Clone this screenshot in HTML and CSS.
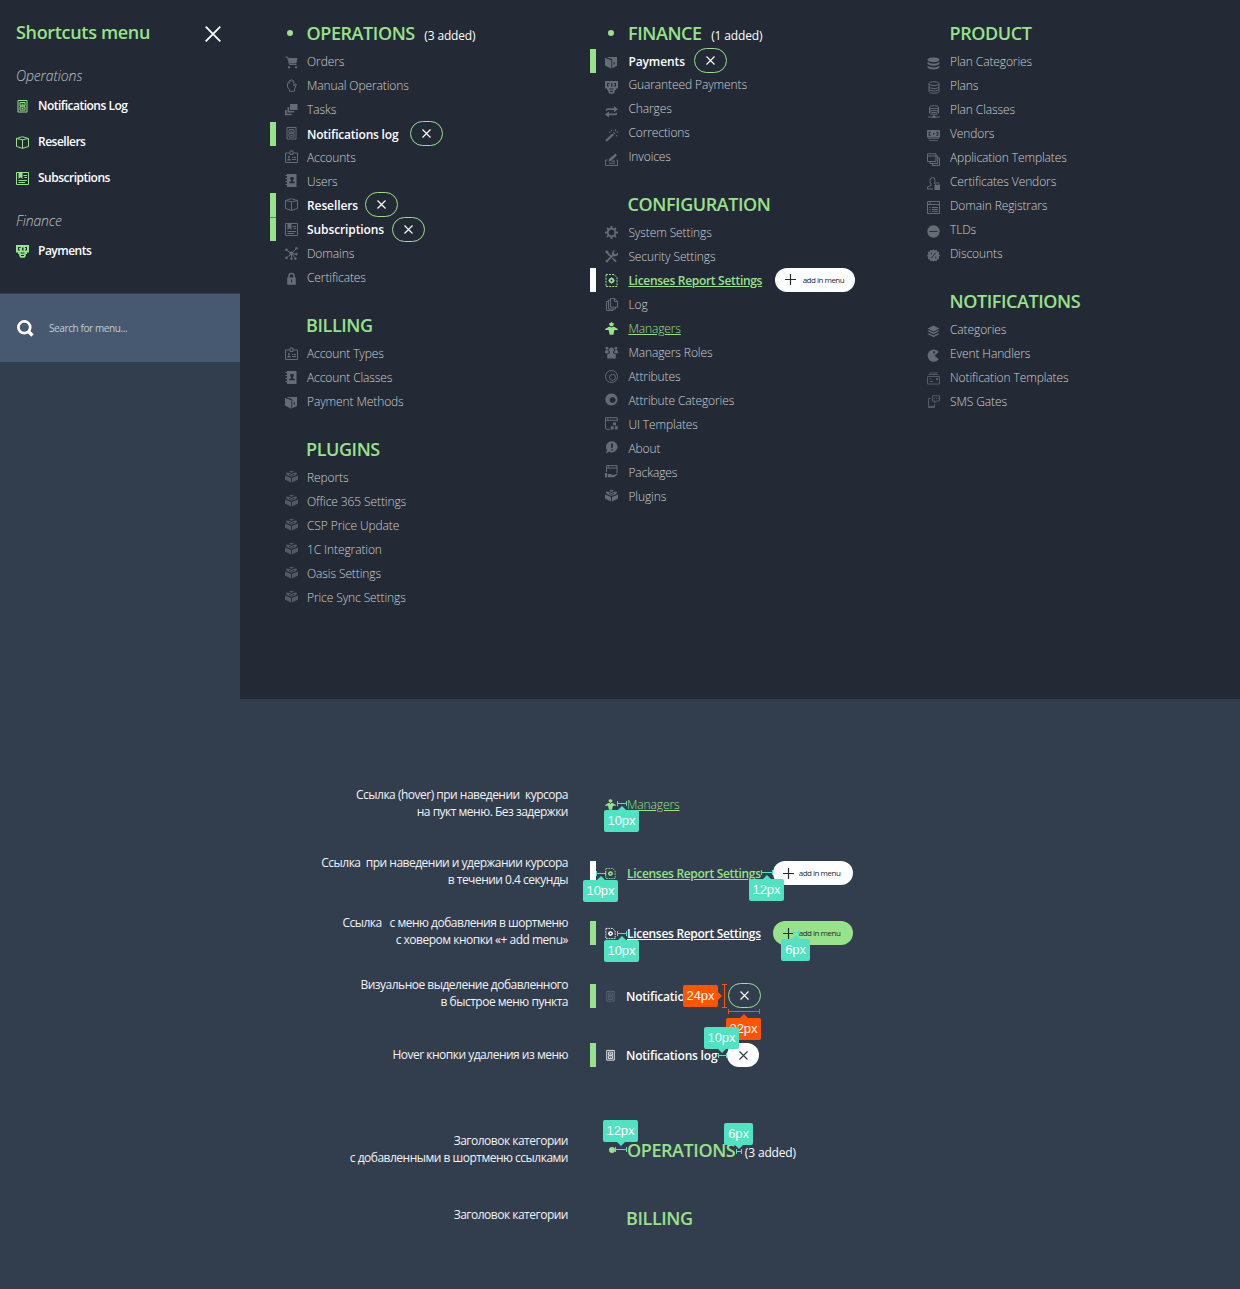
FILE: index.html
```html
<!DOCTYPE html>
<html lang="en">
<head>
<meta charset="utf-8">
<title>Shortcuts menu</title>
<link rel="stylesheet" href="styles.css">
</head>
<body>
<svg class="sprite" aria-hidden="true">
  <symbol id="i-cart" viewBox="0 0 13 13"><path d="M.5 1h2l2 7.5h7" class="s"/><path d="M3 2h9.5l-1.2 5.500H4.500zM4 10a1.200 1.200 0 1 0 .1 0zM11 10a1.200 1.200 0 1 0 .1 0z"/></symbol>
  <symbol id="i-hand" viewBox="0 0 13 13"><path d="M2.500 7V4.500q0-.8.8-.8t.8.8V2.200q0-.8.8-.8t.8.8V1.500q0-.8.8-.8t.8.8v1q0-.8.8-.8t.8.8V7l1.200-1.700q.7-.6 1.300 0L9.500 10v2.300h-5V10.500Q2.500 9 2.500 7z" class="s"/></symbol>
  <symbol id="i-tasks" viewBox="0 0 13 13"><path d="M5 1h7.500v6H5zM2.500 4h1.700v4h5v1.500H2.500zM0 7h1.700v3.800h5v1.500H0z"/></symbol>
  <symbol id="i-cabinet" viewBox="0 0 13 13"><path d="M2 .5h9v11.500H2zM4 2.500h5v3.300H4zM4 6.800h5v3.300H4z" class="s"/><path d="M5.500 3.700h2v1h-2zM5.500 8h2v1h-2z"/></symbol>
  <symbol id="i-badge" viewBox="0 0 13 13"><path d="M5 3H.5v9.500h12V3H8M5 1h3v3.500H5z" class="s"/><path d="M4 6a1 1 0 1 1-.1 0zM2.200 10.500Q2.200 8.500 4 8.500t1.800 2zM7 7h1.500v1H7zM9 7h2v1H9zM7 9h4v1H7z"/></symbol>
  <symbol id="i-book" viewBox="0 0 13 13"><path fill-rule="evenodd" d="M2 0h9.500v13H2v-2H.5v-1H2V8H.5V7H2V5H.5V4H2V2H.5V1H2zM7 3a1.500 1.500 0 0 0-.7 3L6 7.200 4.300 8v1.200h5.400V8L8 7.200 7.700 6A1.500 1.500 0 0 0 7 3z"/></symbol>
  <symbol id="i-box" viewBox="0 0 13 13"><path d="M.5 2.500 6.500 .7l6 1.800v8l-6 1.900-6-1.900zM.5 2.500l6 1.300 6-1.300M6.500 3.800v8.500" class="s"/></symbol>
  <symbol id="i-news" viewBox="0 0 13 13"><path d="M.5 .5h12v12H.5zM7.500 3.500H11M8.500 5.500H11M2.500 8.500H11M2.500 10.500H9" class="s"/><path d="M2.500 1h4v6l-2-1.800L2.500 7z"/></symbol>
  <symbol id="i-nodes" viewBox="0 0 13 13"><path d="m1.500 3 5 3.500 5-5M1.500 11l5-4.500 5 1M6.500 6.500V12M6.500 6.500l4 5" class="s"/><path d="M1.500 1.500a1.300 1.300 0 1 1-.1 0zM11.500 0a1.300 1.300 0 1 1-.1 0zM1.500 9.500a1.300 1.300 0 1 1-.1 0zM11.500 5.800a1.300 1.300 0 1 1-.1 0zM6.500 10.300a1.300 1.300 0 1 1-.1 0zM10.500 10.300a1.300 1.300 0 1 1-.1 0zM6.500 4.500a2 2 0 1 1-.1 0z"/></symbol>
  <symbol id="i-lock" viewBox="0 0 13 13"><path fill-rule="evenodd" d="M2.200 5.500h1V4a3.300 3.300 0 0 1 6.600 0v1.500h1V12.800H2.200zM4.700 5.500h3.600V4a1.800 1.800 0 0 0-3.600 0zM6 7.500v3h1v-3z"/></symbol>
  <symbol id="i-wallet" viewBox="0 0 13 13"><path d="M0 1.800 6.300 4v8.800L0 9.500z"/><path fill-rule="evenodd" d="M1 1h11v9L7.200 12.300V3.500zM8.600 6.500v2h1.300v-2z"/><path d="m1 1.800 6 1.700" class="cut"/></symbol>
  <symbol id="i-brick" viewBox="0 0 13 13"><path d="M0 5.500 6 8v4.500l-6-3zM13 5.500 7 8v4.500l6-3zM6.500 2.500 12 4.700 6.500 7 1 4.700z"/><path d="M4.500 1.200q2-1 4 0v1h-4zM1 3q1.500-1 3 0v1H1zM9 3q1.500-1 3 0v1H9z"/><path d="M4 4.700h1.500M7.500 4.700H9M5.500 3.500h2M5.500 5.900h2" class="cut"/></symbol>
  <symbol id="i-cash" viewBox="0 0 13 13"><path fill-rule="evenodd" d="M0 0h13v7.500h-2V9H9.800v2L8.500 12.700h-4L3.200 11V9H2V7.500H0zM2 2v3.500h2v-1H3V3h1.500V2zM9 2v1h1v1.500H9v1h2V2zM6 2.500v3h1.500v-3zM4.500 7.500v1h4v-1zM5 10v1h3v-1z"/></symbol>
  <symbol id="i-swap" viewBox="0 0 13 13"><path d="M.8 6V5q0-1.700 1.700-1.700H9V1l4 3.200-4 3V5H3zM12.200 7.500v1q0 1.800-1.700 1.800H4v2.200L0 9.400 4 6.500v2.100h6z"/></symbol>
  <symbol id="i-wand" viewBox="0 0 13 13"><path d="M.2 11.200 7.300 4.500l1.700 1.600-7.200 6.700zM8 3.700l.7-.7 1.700 1.600-.7.800zM6 .8h1.200V2H6zM10 .3h1v2h-1zM11.500 2.500H13v1h-1.500zM11 6h1.200v1.200H11zM4.200 2.500h1.200v1.200H4.200z"/></symbol>
  <symbol id="i-invoice" viewBox="0 0 13 13"><path d="M2.500 7H.5v5.500h12V7h-1M4 10.200h6" class="s"/><path d="M3.500 8.500 4 6l6.500-5.500 1.500 1.700-6 5.700zM7.500 7.500H10v1.200H6.500z"/></symbol>
  <symbol id="i-gear" viewBox="0 0 13 13"><circle cx="6.500" cy="6.500" r="3.800" class="s s2"/><path d="M5.500 0h2v2.500h-2zM5.500 10.500h2V13h-2zM0 5.500h2.500v2H0zM10.500 5.500H13v2h-2.500zM1.300 2.700l1.400-1.400 1.600 1.600-1.400 1.400zM10.300 1.300l1.400 1.400-1.600 1.600-1.400-1.400zM1.300 10.300l1.600-1.600 1.400 1.400-1.600 1.600zM8.700 10.100l1.400-1.400 1.600 1.600-1.400 1.400z"/></symbol>
  <symbol id="i-tools" viewBox="0 0 13 13"><path d="m1 1.500 6 6M7.500 8l3.500 3.700M2 11.200 8.500 4.700" class="s s2"/><path d="M12.800 2.500 11 4.300l-1.800-.6-.5-1.700L10.500.2Q7.500 0 7 2.500t1 3.400 3.800-.2 1-3.200zM.3 1.700 1.700.3l2 1.500-1 1.400zM1.500 9.800 3.300 11.500 2 12.800.3 11.200z"/></symbol>
  <symbol id="i-license" viewBox="0 0 13 13"><path d="M1 .5h8l3 3v9H1z" class="s dash"/><circle cx="6.500" cy="6.500" r="1.900" class="s s2"/><path d="M6 3.500h1v1H6zM6 8.500h1v1H6zM3.500 6h1v1h-1zM8.500 6h1v1h-1z"/></symbol>
  <symbol id="i-copy" viewBox="0 0 13 13"><path d="M5.500.5h4.300l2.700 2.700v6h-7zM9.500.5v3h3M5.500 2H3.500v9h7V9.500M3.500 3.500H1.500v9h6.500V11" class="s"/></symbol>
  <symbol id="i-manager" viewBox="0 0 13 13"><path d="M6.500 0 7.700 1h1v2Q8 4.300 6.500 4.300T4.300 3V1h1zM4 4.800h1.500l1 1 1-1H9L12.800 7v1H9.500L9 9.500l-.6 3.300H4.600L4 9.500 3.500 8H.2V7z"/></symbol>
  <symbol id="i-team" viewBox="0 0 13 13"><path d="M6.500 1.500a2.300 2.300 0 0 1 1.500 4.200L8 7l2.800 1.500v4H2.200v-4L5 7V5.700a2.300 2.300 0 0 1 1.500-4.200zM2 .8a1.500 1.500 0 1 1-.1 0zM11 .8a1.500 1.500 0 1 1-.1 0zM0 7V5l1.500-1 2 .5v1L4 6.500 2.200 7.500zM13 7V5l-1.500-1-2 .5v1L9 6.500l1.800 1z"/></symbol>
  <symbol id="i-rings" viewBox="0 0 13 13"><circle cx="6.500" cy="6.500" r="6" class="s"/><circle cx="7.500" cy="7.300" r="3" class="s"/></symbol>
  <symbol id="i-disc" viewBox="0 0 13 13"><path fill-rule="evenodd" d="M6.500.4a6.100 6.100 0 1 1-.1 0zM7.500 4a3 3 0 1 0 .1 0z"/></symbol>
  <symbol id="i-ui" viewBox="0 0 13 13"><path d="M5 12.300H2Q.5 12.300.5 11V.7h11.700V4.500M.5 3.300H12M2 2h1.500" class="s"/><path d="M8 5.500h3v2.700H8zM5.700 9.300h3V12.500h-3zM10 9.300h2.700v3.200H10z"/></symbol>
  <symbol id="i-about" viewBox="0 0 13 13"><path fill-rule="evenodd" d="M7 .3a5.600 5.600 0 1 1-2.800 10.500L1 12.500 2 9A5.600 5.600 0 0 1 7 .3zM6 2.500 6.300 7h1.400L8 2.500zM6.300 8v1.500h1.400V8z"/></symbol>
  <symbol id="i-package" viewBox="0 0 13 13"><path d="M1.500 7V.6h10.500V8M1.500 3H12M3 1.800h1" class="s"/><path d="M0 8h2v4.500H0zM2.700 9h3l1.500 1H9l3-1.500.5 1L9 12.200H2.700z"/></symbol>
  <symbol id="i-stack" viewBox="0 0 13 13"><path d="M6.500.5c3.300 0 6 .9 6 2.300S9.800 5.200 6.500 5.200.5 4.200.5 2.800s2.700-2.300 6-2.300zM.5 5q2 1.800 6 1.800t6-1.800v1.500q-1.500 2.200-6 2.200T.5 6.500zM.5 8.800q2 1.800 6 1.800t6-1.800v1.500q-1.500 2.200-6 2.200t-6-2.200z"/></symbol>
  <symbol id="i-db" viewBox="0 0 13 13"><path d="M2 2.500Q2 .7 7 .7t5 1.800v8q0 1.800-5 1.800t-5-1.800zM2 3q1 1.500 5 1.500T12 3M2 6q1 1.500 5 1.500T12 6M2 8.500Q3 10 7 10t5-1.500" class="s"/></symbol>
  <symbol id="i-dbnet" viewBox="0 0 13 13"><path d="M2.500 2q0-1.300 4.500-1.300T11.500 2v6q0 1.300-4.500 1.300T2.500 8zM2.500 2.500Q3.500 3.700 7 3.700t4.500-1.200M2.500 4.500Q3.500 5.700 7 5.700t4.500-1.200M2.500 6.300Q3.500 7.500 7 7.500t4.500-1.200M7 9.500v2.500M1 12h12" class="s"/><path d="M5.500 11h3v2h-3z"/></symbol>
  <symbol id="i-money" viewBox="0 0 13 13"><path fill-rule="evenodd" d="M0 1h13v7.500H0zM1.700 2.700v4h2v-1h-1v-2h1v-1zM9.300 2.700v1h1v2h-1v1h2v-4zM6 4v1.500h1.300V4zM1 9.300h11v.8H1zM2 11h9v.8H2z"/></symbol>
  <symbol id="i-windows" viewBox="0 0 13 13"><path d="M.5.8h8.500v7.700H.5zM.5 3H9M9 3h1.700v7.500H3V8.500M10.700 5h1.800v7.500H5.500V10.500" class="s"/></symbol>
  <symbol id="i-userlock" viewBox="0 0 13 13"><path d="M6 12H.5v-2L4 8.500V7Q3 6 3 3.500t2.500-3 2.500 3T7 7" class="s"/><path fill-rule="evenodd" d="M7.500 8h.7V7a2.200 2.200 0 0 1 4.300 0v1h.5v5H7.500zM9.300 8h2.200V7a1.100 1.100 0 0 0-2.200 0z"/></symbol>
  <symbol id="i-browser" viewBox="0 0 13 13"><path d="M.5.5h12v12H.5zM.5 3.500h12M5 6.500h6M5 8.500h6M5 10.300h6M2 2h2" class="s"/><path d="M2.300 6h1.200v1H2.300zM2.300 8h1.200v1H2.300zM2.300 9.800h1.200v1H2.300z"/></symbol>
  <symbol id="i-tld" viewBox="0 0 13 13"><circle cx="6.500" cy="6.500" r="6.200"/><path d="M2.500 6.500h8" class="cut"/></symbol>
  <symbol id="i-discount" viewBox="0 0 13 13"><path d="m6.500.2 1.300 1.200 1.700-.6.700 1.700 1.900.6-.3 1.900L13 6.500l-1.200 1.500.3 1.900-1.900.6-.7 1.700-1.700-.6-1.300 1.200-1.300-1.200-1.700.6-.7-1.700-1.900-.6.300-1.900L0 6.500 1.200 5 .9 3.100l1.900-.6.700-1.700 1.700.6z"/><path d="m9 3.500-5 6M4.300 3.500v2M8.800 7.500v2" class="cut"/></symbol>
  <symbol id="i-layers" viewBox="0 0 13 13"><path d="M6.500.5 12.500 3.500l-6 3-6-3zM.5 6 2 5.300l4.500 2.200L11 5.300l1.500.7-6 3.200zM.5 9 2 8.300l4.500 2.200L11 8.300l1.500.7-6 3.300z"/></symbol>
  <symbol id="i-pac" viewBox="0 0 13 13"><path fill-rule="evenodd" d="M11.800 3 7.500 6.500l4.300 3.700A6.200 6.200 0 1 1 11.800 3zM7 2.300a1 1 0 1 0 .1 0z"/></symbol>
  <symbol id="i-card" viewBox="0 0 13 13"><path d="M.5 4.500h12v7.500H.5zM1.500 2.500h10M2.500.9h8M2.500 7h2M2.500 9.500H6" class="s"/><path d="M9 6h2.200v2.200H9z"/></symbol>
  <symbol id="i-sms" viewBox="0 0 13 13"><path d="M4 3.500H1.500v9h6V9M5.500.8h7V6H9L7.500 8V6h-2z" class="s"/><path d="M7 3h1v1H7zM9 3h1v1H9zM11 3h1v1h-1zM1.500 11h6v1.500h-6z"/></symbol>
  <symbol id="i-search" viewBox="0 0 17 17"><circle cx="7.300" cy="7.300" r="5.900" class="s s3"/><path d="m11.500 11.500 4 4" class="s s4"/></symbol>
  <symbol id="i-close" viewBox="0 0 16 16"><path d="m.7.7 14.600 14.600M15.300.7.7 15.300" class="s s2"/></symbol>
  <symbol id="i-x" viewBox="0 0 9 9"><path d="m.5.500 8 8M8.500.5l-8 8" class="s sx"/></symbol>
  <symbol id="i-plus" viewBox="0 0 11 11"><path d="M5.500 0v11M0 5.500h11" class="s sx"/></symbol>
</svg>

<div class="app">
  <aside class="sidebar">
    <section class="shortcuts">
      <header class="shortcuts-head"><h1>Shortcuts menu</h1><svg class="close"><use href="#i-close"/></svg></header>
      <h3>Operations</h3>
      <ul>
        <li><svg class="icon"><use href="#i-cabinet"/></svg><a>Notifications Log</a></li>
        <li><svg class="icon"><use href="#i-box"/></svg><a>Resellers</a></li>
        <li><svg class="icon"><use href="#i-news"/></svg><a>Subscriptions</a></li>
      </ul>
      <h3>Finance</h3>
      <ul>
        <li><svg class="icon"><use href="#i-cash"/></svg><a>Payments</a></li>
      </ul>
    </section>
    <div class="search"><svg><use href="#i-search"/></svg><span>Search for menu...</span></div>
  </aside>

  <nav class="mega">
    <div class="col col-a">
      <section>
        <h2 class="has-added">OPERATIONS<small>(3 added)</small></h2>
        <ul>
          <li class="dn1"><svg class="icon"><use href="#i-cart"/></svg><a>Orders</a></li>
          <li><svg class="icon"><use href="#i-hand"/></svg><a>Manual Operations</a></li>
          <li><svg class="icon"><use href="#i-tasks"/></svg><a>Tasks</a></li>
          <li class="added shifted up1"><svg class="icon"><use href="#i-cabinet"/></svg><a class="tight">Notifications log</a><button class="remove far"><svg><use href="#i-x"/></svg></button></li>
          <li class="up1"><svg class="icon"><use href="#i-badge"/></svg><a>Accounts</a></li>
          <li class="up1"><svg class="icon"><use href="#i-book"/></svg><a>Users</a></li>
          <li class="added up1"><svg class="icon"><use href="#i-box"/></svg><a>Resellers</a><button class="remove near"><svg><use href="#i-x"/></svg></button></li>
          <li class="added"><svg class="icon"><use href="#i-news"/></svg><a>Subscriptions</a><button class="remove low"><svg><use href="#i-x"/></svg></button></li>
          <li><svg class="icon"><use href="#i-nodes"/></svg><a>Domains</a></li>
          <li class="dn1"><svg class="icon"><use href="#i-lock"/></svg><a>Certificates</a></li>
        </ul>
      </section>
      <section>
        <h2>BILLING</h2>
        <ul>
          <li><svg class="icon"><use href="#i-badge"/></svg><a>Account Types</a></li>
          <li><svg class="icon"><use href="#i-book"/></svg><a>Account Classes</a></li>
          <li class="dn1"><svg class="icon"><use href="#i-wallet"/></svg><a>Payment Methods</a></li>
        </ul>
      </section>
      <section>
        <h2>PLUGINS</h2>
        <ul class="dim">
          <li class="up1"><svg class="icon"><use href="#i-brick"/></svg><a>Reports</a></li>
          <li class="up1"><svg class="icon"><use href="#i-brick"/></svg><a>Office 365 Settings</a></li>
          <li class="up1"><svg class="icon"><use href="#i-brick"/></svg><a>CSP Price Update</a></li>
          <li class="up1"><svg class="icon"><use href="#i-brick"/></svg><a>1C Integration</a></li>
          <li class="up1"><svg class="icon"><use href="#i-brick"/></svg><a>Oasis Settings</a></li>
          <li class="up1"><svg class="icon"><use href="#i-brick"/></svg><a>Price Sync Settings</a></li>
        </ul>
      </section>
    </div>

    <div class="col col-b">
      <section>
        <h2 class="has-added">FINANCE<small>(1 added)</small></h2>
        <ul class="finance">
          <li class="added dn1"><svg class="icon"><use href="#i-wallet"/></svg><a>Payments</a><button class="remove mid"><svg><use href="#i-x"/></svg></button></li>
          <li class="dn3"><svg class="icon"><use href="#i-cash"/></svg><a>Guaranteed Payments</a></li>
          <li class="dn3"><svg class="icon"><use href="#i-swap"/></svg><a>Charges</a></li>
          <li class="dn3"><svg class="icon"><use href="#i-wand"/></svg><a>Corrections</a></li>
          <li class="dn3"><svg class="icon"><use href="#i-invoice"/></svg><a>Invoices</a></li>
        </ul>
      </section>
      <section>
        <h2>CONFIGURATION</h2>
        <ul>
          <li><svg class="icon"><use href="#i-gear"/></svg><a>System Settings</a></li>
          <li><svg class="icon"><use href="#i-tools"/></svg><a>Security Settings</a></li>
          <li class="held"><svg class="icon"><use href="#i-license"/></svg><a>Licenses Report Settings</a><button class="add"><svg><use href="#i-plus"/></svg>add in menu</button></li>
          <li><svg class="icon"><use href="#i-copy"/></svg><a>Log</a></li>
          <li class="hover"><svg class="icon"><use href="#i-manager"/></svg><a>Managers</a></li>
          <li><svg class="icon"><use href="#i-team"/></svg><a>Managers Roles</a></li>
          <li><svg class="icon"><use href="#i-rings"/></svg><a>Attributes</a></li>
          <li class="up1"><svg class="icon"><use href="#i-disc"/></svg><a>Attribute Categories</a></li>
          <li class="up1"><svg class="icon"><use href="#i-ui"/></svg><a>UI Templates</a></li>
          <li class="up1"><svg class="icon"><use href="#i-about"/></svg><a>About</a></li>
          <li class="up1"><svg class="icon"><use href="#i-package"/></svg><a>Packages</a></li>
          <li class="up1"><svg class="icon"><use href="#i-brick"/></svg><a>Plugins</a></li>
        </ul>
      </section>
    </div>

    <div class="col">
      <section>
        <h2>PRODUCT</h2>
        <ul>
          <li class="dn2"><svg class="icon"><use href="#i-stack"/></svg><a>Plan Categories</a></li>
          <li class="dn2"><svg class="icon"><use href="#i-db"/></svg><a>Plans</a></li>
          <li class="dn2"><svg class="icon"><use href="#i-dbnet"/></svg><a>Plan Classes</a></li>
          <li class="dn2"><svg class="icon"><use href="#i-money"/></svg><a>Vendors</a></li>
          <li class="dn2"><svg class="icon"><use href="#i-windows"/></svg><a>Application Templates</a></li>
          <li class="dn2"><svg class="icon"><use href="#i-userlock"/></svg><a>Certificates Vendors</a></li>
          <li class="dn2"><svg class="icon"><use href="#i-browser"/></svg><a>Domain Registrars</a></li>
          <li class="dn2"><svg class="icon"><use href="#i-tld"/></svg><a>TLDs</a></li>
          <li class="dn2"><svg class="icon"><use href="#i-discount"/></svg><a>Discounts</a></li>
        </ul>
      </section>
      <section>
        <h2>NOTIFICATIONS</h2>
        <ul>
          <li class="dn2"><svg class="icon"><use href="#i-layers"/></svg><a>Categories</a></li>
          <li class="dn2"><svg class="icon"><use href="#i-pac"/></svg><a>Event Handlers</a></li>
          <li class="dn1 dim"><svg class="icon"><use href="#i-card"/></svg><a>Notification Templates</a></li>
          <li class="dim"><svg class="icon"><use href="#i-sms"/></svg><a>SMS Gates</a></li>
        </ul>
      </section>
    </div>
  </nav>
</div>

<main class="specs">
  <div class="spec r1">
    <p>Ссылка (hover) при наведении  курсора
на пукт меню. Без задержки</p>
    <div class="item hover"><svg class="icon"><use href="#i-manager"/></svg><a>Managers</a>
      <i class="rule w10"></i><b class="tag up t-icon">10px</b></div>
  </div>
  <div class="spec r2">
    <p>Ссылка  при наведении и удержании курсора
в течении 0.4 секунды</p>
    <div class="item held"><svg class="icon"><use href="#i-license"/></svg><a>Licenses Report Settings</a><button class="add"><svg><use href="#i-plus"/></svg>add in menu</button>
      <i class="rule bar-gap"></i><b class="tag up t-bar">10px</b><i class="rule pill-gap"></i><b class="tag up t-pill">12px</b></div>
  </div>
  <div class="spec r3">
    <p>Ссылка   с меню добавления в шортменю
с ховером кнопки «+ add menu»</p>
    <div class="item held active"><svg class="icon"><use href="#i-license"/></svg><a>Licenses Report Settings</a><button class="add"><svg><use href="#i-plus"/></svg>add in menu</button>
      <i class="rule w10"></i><b class="tag up t-icon">10px</b><i class="rule plus-gap"></i><b class="tag up small t-plus">6px</b></div>
  </div>
  <div class="spec r4">
    <p>Визуальное выделение добавленного
в быстрое меню пункта</p>
    <div class="item added"><svg class="icon"><use href="#i-cabinet"/></svg><a class="tight">Notifications log</a><button class="remove"><svg><use href="#i-x"/></svg></button>
      <i class="rule tall"></i><b class="tag right orange t-height">24px</b><i class="rule wide"></i><b class="tag up orange t-width">32px</b></div>
  </div>
  <div class="spec r5">
    <p>Hover кнопки удаления из меню</p>
    <div class="item added active"><svg class="icon"><use href="#i-cabinet"/></svg><a class="tight">Notifications log</a><button class="remove solid"><svg><use href="#i-x"/></svg></button>
      <i class="rule label-gap"></i><b class="tag down t-label">10px</b></div>
  </div>
  <div class="spec r6">
    <p>Заголовок категории
с добавленными в шортменю ссылками</p>
    <div class="item title"><h2 class="has-added">OPERATIONS<small>(3 added)</small></h2>
      <i class="rule dot-gap"></i><b class="tag down t-dot">12px</b><i class="rule count-gap"></i><b class="tag down small t-count">6px</b></div>
  </div>
  <div class="spec r7">
    <p>Заголовок категории</p>
    <div class="item title"><h2>BILLING</h2></div>
  </div>
</main>
</body>
</html>
```
FILE: styles.css
```css
:root {
  --page: #323d4d;
  --dark: #232a35;
  --green: #97e28b;
  --teal: #50e3c2;
  --orange: #ff5500;
}
* { box-sizing: border-box; }
body {
  margin: 0;
  width: 1240px;
  height: 1289px;
  overflow: hidden;
  background: var(--page);
  color: #fff;
  font: 12px/24px "Open Sans", "Noto Sans", sans-serif;
}
h1, h2, h3, p, ul { margin: 0; padding: 0; }
ul { list-style: none; }
svg { display: block; flex: none; fill: currentColor; }
.sprite { display: none; }
.s { fill: none; stroke: currentColor; stroke-width: 1; }
.s2 { stroke-width: 1.8; }
.s3 { stroke-width: 2.7; }
.s4 { stroke-width: 3.2; }
.sx { stroke-width: 1.2; }
.dash { stroke-dasharray: 2 1; }
.cut { fill: none; stroke: #232a35; stroke-width: .9; }
.icon { width: 13px; height: 13px; }
li a, .item a { padding-top: 2px; }

button {
  display: flex;
  align-items: center;
  flex: none;
  padding: 0;
  border: 0;
  font: inherit;
}

/* Shortcuts sidebar */
.app { display: flex; height: 699px; }
.sidebar { width: 240px; }
.shortcuts { height: 293px; padding: 17px 19px 0 16px; background: var(--dark); }
.shortcuts-head { display: flex; justify-content: space-between; color: var(--green); }
.shortcuts-head .close { width: 16px; height: 16px; margin-top: 9px; color: #fff; }
h1 { font-size: 18px; line-height: 30px; font-weight: 600; letter-spacing: -.32px; }
.shortcuts h3 {
  font-size: 14px;
  line-height: 24px;
  font-style: italic;
  font-weight: 300;
  letter-spacing: -.12px;
  color: #c0c3c7;
  margin-top: 17px;
}
.shortcuts li {
  display: flex;
  align-items: center;
  gap: 9px;
  height: 36px;
  font-weight: 600;
  letter-spacing: -.5px;
}
.shortcuts .icon { color: var(--green); margin-top: 2px; }
.shortcuts h3 + ul { margin-top: -1px; }
.shortcuts ul + h3 { margin-top: 14px; }
.search {
  display: flex;
  align-items: center;
  gap: 15px;
  height: 68px;
  margin-top: .5px;
  padding-left: 17px;
  background: #465970;
  font-size: 10px;
  letter-spacing: -.4px;
  color: #c3cad3;
}
.search svg { width: 17px; height: 17px; color: #fff; margin-top: 1px; }

/* Full menu */
.mega {
  display: grid;
  grid-template-columns: 320px 322px 1fr;
  flex: 1;
  padding: 17px 0 0 30px;
  background: var(--dark);
}
.col section { margin-bottom: 20px; }
h2 {
  display: flex;
  align-items: baseline;
  height: 32px;
  padding-left: 37.5px;
  color: var(--green);
  font-size: 18px;
  line-height: 32px;
  font-weight: 600;
  letter-spacing: -.42px;
}
.col-a h2 { padding-left: 36px; }
h2.has-added::before {
  content: "";
  align-self: flex-start;
  width: 6px;
  height: 6px;
  margin: 13px 14px 0 -19.5px;
  border-radius: 50%;
  background: currentColor;
}
h2 small {
  margin-left: 9.5px;
  color: #fff;
  font-size: 12px;
  line-height: 16px;
  font-weight: 400;
  letter-spacing: -.15px;
}
.mega li, .item {
  display: flex;
  align-items: center;
  height: 24px;
  padding-left: 15px;
  color: #cdcfd2;
  font-weight: 300;
  letter-spacing: -.1px;
}
.mega .icon { color: #656c76; }
.mega .dim .icon { color: #535a65; }
.mega a, .item a { margin-left: 10px; }
.col-a .icon { margin-right: -1px; }
.col-b a { margin-left: 10.4px; }
.up1 .icon { margin-top: -2px; }
.dn1 .icon { margin-top: 3px; }
.dn2 .icon { margin-top: 4px; }
.dn3 .icon { margin-top: 6px; }
.finance li:nth-child(2) { margin-top: -1px; }

/* Item states */
.mega .added, .mega .held, .item.added, .item.held {
  padding-left: 9px;
  border-left: 6px solid var(--green);
  color: #fff;
  font-weight: 600;
}
.mega .added + .added { border-image: linear-gradient(#5d865f 1px, var(--green) 1px) 0 0 0 6; }
.shifted { margin: 1px 0 -1px; }
.tight { letter-spacing: -.2px; }
.mega .held, .item.held { border-color: #fff; color: var(--green); letter-spacing: -.3px; }
.hover { color: var(--green) !important; }
.held a, .hover a { text-decoration: underline; text-underline-offset: 1px; }
.mega .held .icon, .mega .hover .icon { color: var(--green); }

.remove {
  justify-content: center;
  width: 33px;
  height: 25px;
  margin: -2px 0 -1px 8px;
  border: 1.5px solid var(--green);
  border-radius: 13px;
  background: none;
  color: #fff;
}
.remove.far { margin-left: 12px; }
.remove.mid { margin-left: 9.5px; }
.remove.near { margin-left: 7px; }
.remove.low { margin: -1px 0 -2px 8px; }
.remove svg { width: 9px; height: 9px; }
.add {
  gap: 7px;
  width: 80px;
  height: 24px;
  margin: -1px 0 0 12.5px;
  padding-left: 10px;
  border-radius: 12px;
  background: #fff;
  color: #242b35;
  font-size: 8px;
  font-weight: 400;
  letter-spacing: -.5px;
  white-space: nowrap;
}
.add svg { width: 11px; height: 11px; }

/* State specification */
.specs {
  display: grid;
  grid-template-rows: 68px 60px 62px 67px 89px 74px 50px;
  padding-top: 87px;
}
.spec { display: grid; grid-template-columns: 568px 1fr; column-gap: 22px; align-items: start; }
.spec p {
  line-height: 17px;
  letter-spacing: -.5px;
  text-align: right;
  white-space: pre;
  color: #f2f3f5;
}
.spec .item { position: relative; margin-top: 7px; }
.item .icon { width: 11px; height: 13px; }
.r1 .item { margin-top: 6px; }
.r4 .item { margin-top: 8px; }
.r5 p { margin-top: 3px; }
.r5 .item { margin-top: 0; }
.r1 .item a { margin-left: 11px; }
.item.held.active { border-color: var(--green); color: #fff; }
.item.active .add { background: var(--green); }
.item .add { gap: 5px; margin: 0 0 0 12px; }
.item.held a { margin-left: 11px; }
.item.added:not(.active) .icon { color: #5d6673; }
.item .remove { margin-left: 10.5px; }
.item .remove.solid {
  width: 32px;
  height: 24px;
  margin: 0 0 0 10px;
  border: 0;
  background: #fff;
  color: #333d4d;
}
.item.title { height: 32px; padding: 0; margin-top: 2px; }
.r7 .item.title { margin-top: -4px; }
.title h2 { padding-left: 36px; }
.title h2.has-added::before { margin: 13px 12px 0 -17px; }

/* Measurement overlays */
.rule {
  position: absolute;
  height: 5px;
  border: solid var(--teal);
  border-width: 0 1px;
  background: linear-gradient(var(--teal), var(--teal)) 0 2px / 100% 1px no-repeat;
}
.tag {
  position: absolute;
  width: 35px;
  height: 22px;
  border-radius: 2px;
  background: var(--teal);
  color: #fff;
  font: 13px/22px "Liberation Sans", sans-serif;
  letter-spacing: -.1px;
  text-align: center;
}
.tag.small { width: 29px; }
.tag::after {
  content: "";
  position: absolute;
  left: calc(50% - 4px);
  border: 4px solid transparent;
}
.tag.up::after { top: -8px; border-bottom-color: var(--teal); }
.tag.down::after { bottom: -8px; border-top-color: var(--teal); }
.tag.orange { background: var(--orange); }
.tag.orange::after { border-bottom-color: var(--orange); }
.tag.right::after { left: auto; right: -8px; top: 7px; border-bottom-color: transparent; border-left-color: var(--orange); }

.w10 { left: 27px; top: 9px; width: 10px; }
.t-icon { left: 14px; top: 18px; }
.held .w10 { left: 21px; top: 10px; }
.held .t-icon { left: 8px; top: 19px; }
.bar-gap { left: 0; top: 10px; width: 10px; }
.t-bar { left: -13px; top: 19px; }
.pill-gap { left: 165px; top: 9px; width: 12px; }
.t-pill { left: 153px; top: 18px; }
.plus-gap { left: 197px; top: 9px; width: 6px; }
.t-plus { left: 185px; top: 18px; }
.tall {
  left: 126px;
  top: 0;
  width: 5px;
  height: 24px;
  border-color: var(--orange);
  border-width: 1px 0;
  background: linear-gradient(var(--orange), var(--orange)) 2px 0 / 1px 100% no-repeat;
}
.t-height { left: 87px; top: 1px; }
.wide {
  left: 132px;
  top: 25px;
  width: 32px;
  border-color: var(--orange);
  background-image: linear-gradient(var(--orange), var(--orange));
}
.t-width { left: 130px; top: 34px; }
.label-gap { left: 122px; top: 10px; width: 9px; }
.t-label { left: 108px; top: -16px; z-index: 1; }
.dot-gap { left: 25px; top: 13px; width: 12px; }
.t-dot { left: 13px; top: -14px; }
.count-gap { left: 146px; top: 15px; width: 6px; }
.t-count { left: 134px; top: -11px; }
```
